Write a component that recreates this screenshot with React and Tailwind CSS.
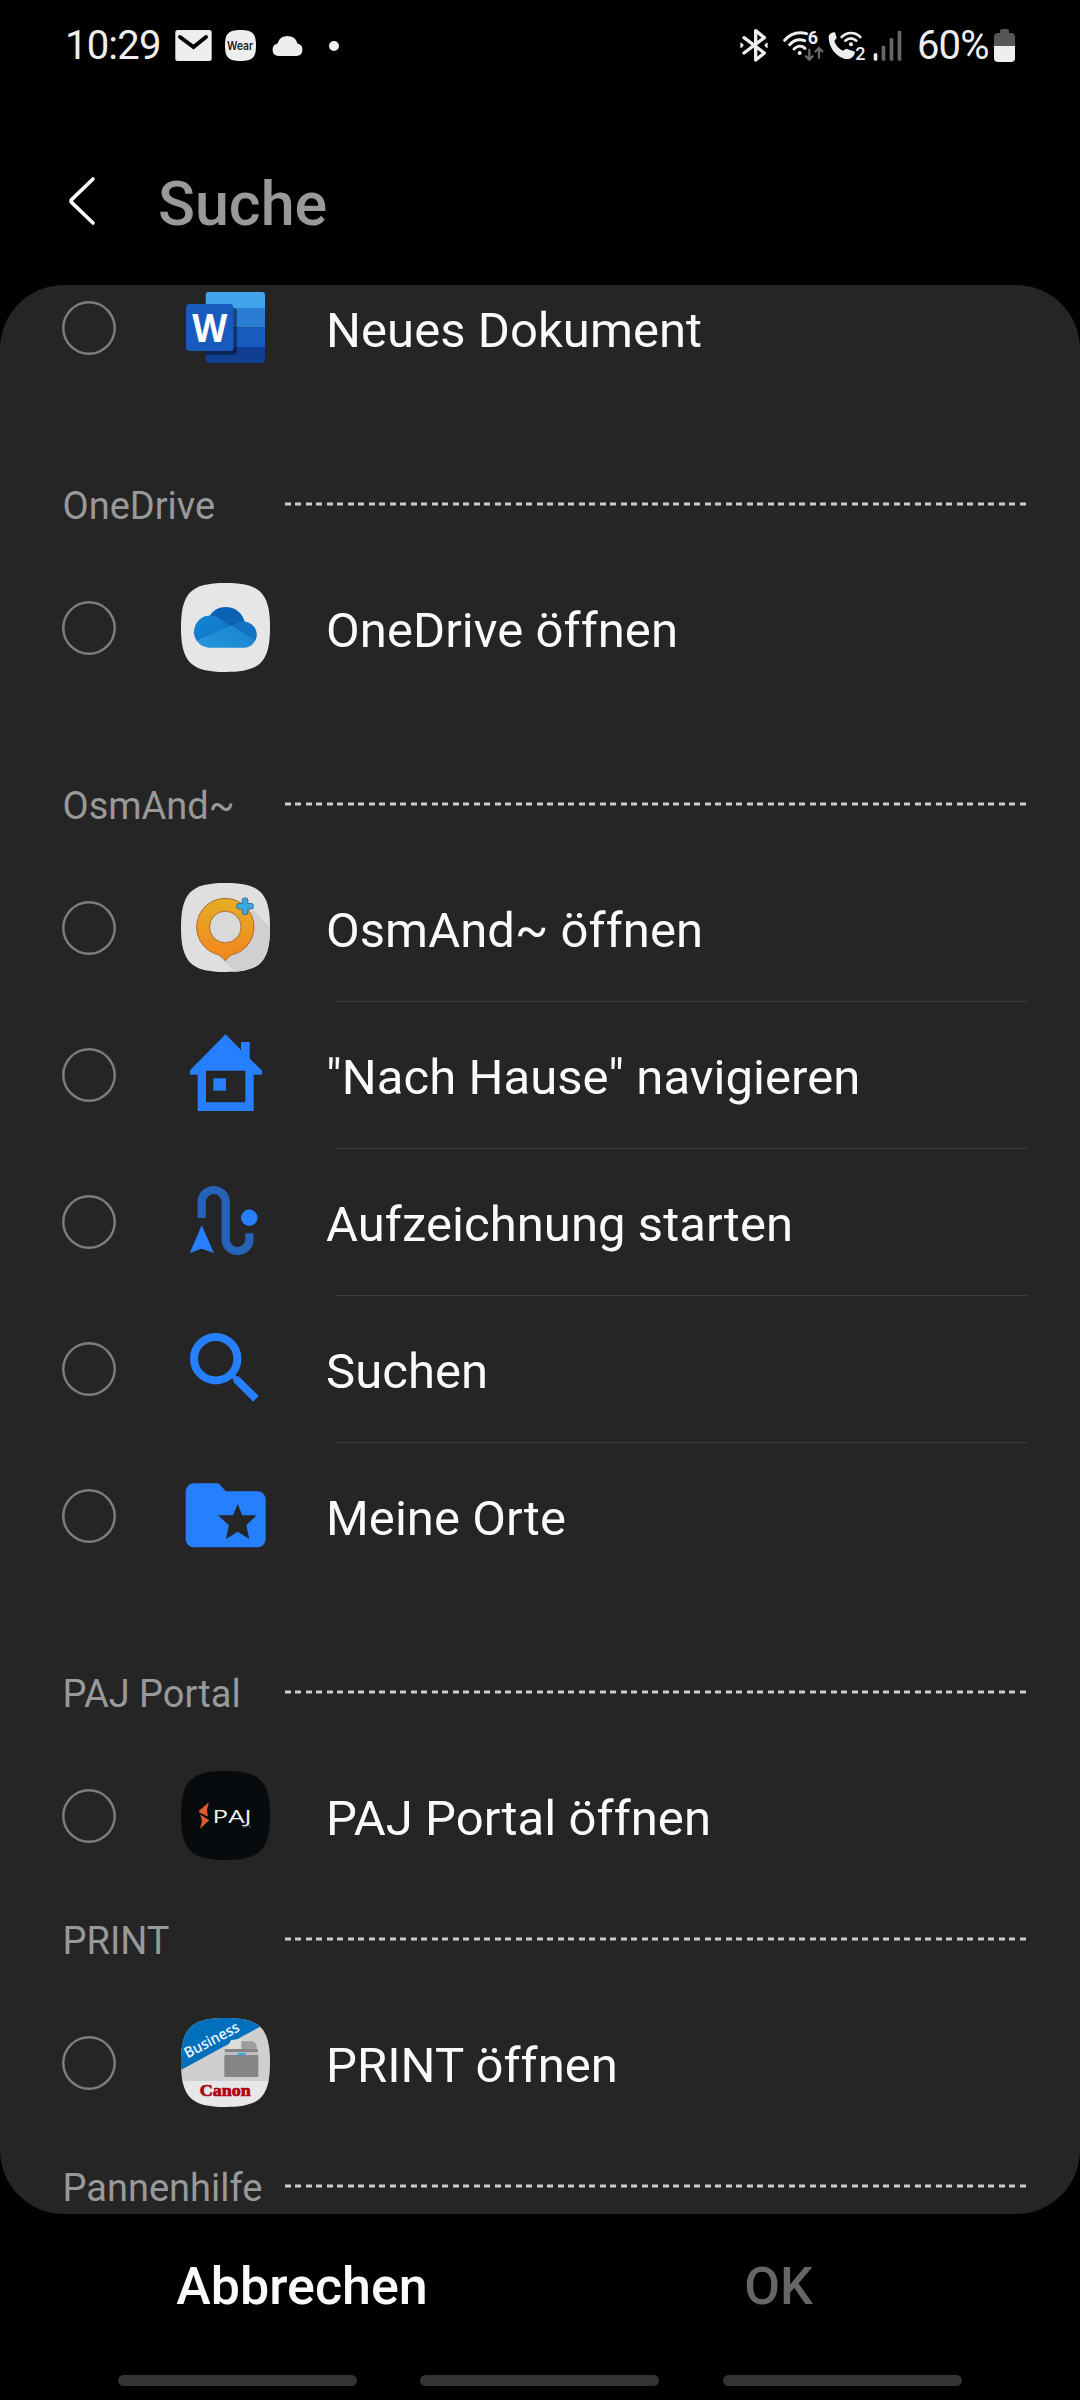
import React, { useState } from 'react'
import clsx from 'clsx'

const SQUIRCLE = 'M1 44.5C1 10 11 0 45.5 0S90 10 90 44.5S80 89 45.5 89S1 79 1 44.5Z'

const WordIcon = () => (
  <svg className="w-[90px] h-[90px]" viewBox="0 0 90 90">
    <defs>
      <clipPath id="word-page">
        <rect x="25.7" y="9" width="59.3" height="71" rx="3" />
      </clipPath>
    </defs>
    <g clipPath="url(#word-page)">
      <rect x="25" y="9" width="61" height="16" fill="#41a5ee" />
      <rect x="25" y="25" width="61" height="19.5" fill="#2b7cd3" />
      <rect x="25" y="44.5" width="61" height="19.5" fill="#185abd" />
      <rect x="25" y="64" width="61" height="17" fill="#103f91" />
      <rect x="8" y="25" width="49" height="46.7" rx="3.5" fill="#000" opacity="0.42" />
    </g>
    <rect x="6" y="21" width="47.3" height="47" rx="3.5" fill="#185abd" />
    <text x="12.3" y="59" fontFamily="Open Sans, sans-serif" fontWeight="700" fontSize="40" textLength="35" lengthAdjust="spacingAndGlyphs" fill="#fff">W</text>
  </svg>
)

const OneDriveIcon = () => (
  <svg className="w-[90px] h-[90px]" viewBox="0 0 90 90">
    <defs>
      <linearGradient id="od-left" x1="0" y1="0" x2="1" y2="1">
        <stop offset="0" stopColor="#1385d6" />
        <stop offset="1" stopColor="#1173c6" />
      </linearGradient>
      <linearGradient id="od-bottom" x1="0" y1="1" x2="1" y2="0.4">
        <stop offset="0" stopColor="#2497da" />
        <stop offset="1" stopColor="#1a84cf" />
      </linearGradient>
    </defs>
    <path d={SQUIRCLE} fill="#e6e6e6" />
    <path d="M29.5 33C33 27.3 39 24 45.7 24C55 24 62.5 30 64.7 39L50.7 43.6Z" fill="#0a62b3" />
    <path d="M31 32.5A16.3 16.3 0 0 0 17 58.2L50.9 43.2L38.5 35.2C36 33.5 34 32.5 31 32.5Z" fill="url(#od-left)" />
    <path d="M50.5 43L58 39.8C67 35.8 76.8 42.5 76.8 51.8C76.8 54 76.2 56 75 57.9Z" fill="#1272c6" />
    <path d="M17 58L50.7 43L75 57.6C73 62 69 64.8 64 64.8H30.5C25 64.8 20 62.5 17 58Z" fill="url(#od-bottom)" />
  </svg>
)

const OsmAndIcon = () => (
  <svg className="w-[90px] h-[90px]" viewBox="0 0 90 90">
    <defs>
      <linearGradient id="osm-ring" x1="0" y1="0" x2="0" y2="1">
        <stop offset="0" stopColor="#e5ae27" />
        <stop offset="1" stopColor="#f2841b" />
      </linearGradient>
      <clipPath id="osm-clip"><path d={SQUIRCLE} /></clipPath>
    </defs>
    <path d={SQUIRCLE} fill="#dfdfdf" />
    <path d="M34 68L57 91H95V49L73 27Z" fill="#d0d0d0" clipPath="url(#osm-clip)" />
    <circle cx="45.3" cy="44" r="16" fill="#d9d9d9" />
    <path
      d="M45.3 77.7C41.5 74.3 41.5 72 34.5 70.6A28.7 28.7 0 1 1 56.1 70.6C49.1 72 49.1 74.3 45.3 77.7ZM45.3 28.2A15.8 15.8 0 1 0 45.3 59.8A15.8 15.8 0 1 0 45.3 28.2Z"
      fill="url(#osm-ring)" fillRule="evenodd" stroke="#a5602c" strokeWidth="0.9"
    />
    <path d="M65 17.8V28.8M59.5 23.3H70.5" stroke="#2a6a94" strokeWidth="6.6" strokeLinecap="round" />
    <path d="M65 17.8V28.8M59.5 23.3H70.5" stroke="#3ba7dd" strokeWidth="5" strokeLinecap="round" />
  </svg>
)

const HouseIcon = () => (
  <svg className="w-[90px] h-[90px]" viewBox="0 0 90 90" fill="#267fff">
    <path
      fillRule="evenodd"
      d="M45.5 4.3L61 20V12H69.7V28.5L82 40.5V44.7H73.7V81H17.7V44.7H10V40.2ZM26 40.7V72.3H65.3V40.7Z"
    />
    <rect x="33.3" y="48.3" width="12.7" height="12.4" />
  </svg>
)

const TrackIcon = () => (
  <svg className="w-[90px] h-[90px]" viewBox="0 0 90 90" fill="#267fff">
    <path d="M21.7 41V25a12 12 0 0 1 24 0V64a12 12 0 0 0 23.7 0V56.3" fill="none" stroke="#2563b9" strokeWidth="8.2" />
    <circle cx="69.3" cy="40.7" r="8.2" />
    <path d="M21.7 48.3L33.9 76L21.7 71.7L9.8 76Z" />
  </svg>
)

const SearchIcon = () => (
  <svg className="w-[90px] h-[90px]" viewBox="0 0 90 90" fill="none" stroke="#267fff">
    <circle cx="35.7" cy="34.7" r="21.7" strokeWidth="8" />
    <path d="M50 49L58 57" strokeWidth="4.5" />
    <path d="M57.5 56.5L58 57" strokeWidth="8" strokeLinecap="round" />
    <path d="M57.5 56.5L76 74.8" strokeWidth="8" />
  </svg>
)

const PlacesIcon = () => (
  <svg className="w-[90px] h-[90px]" viewBox="0 0 90 90">
    <path
      fill="#267fff" fillRule="evenodd"
      d="M13.7 12.3H38.3L46 20.3H77.7A8 8 0 0 1 85.7 28.3V68.3A8 8 0 0 1 77.7 76.3H13.7A8 8 0 0 1 5.7 68.3V20.3A8 8 0 0 1 13.7 12.3ZM57.7 33L53 44.3H38L48.9 54.2L46 68L57.7 60.8L69.3 68L66.3 54.2L76.7 44.3H62.2Z"
    />
  </svg>
)

const PajIcon = () => (
  <svg className="w-[90px] h-[90px]" viewBox="0 0 90 90">
    <path d={SQUIRCLE} fill="#070b0e" />
    <path d="M28.9 31.3L19 39.7L19.3 41.6L27.8 45.4L27 38.5ZM20.2 43.6L29.2 49.2L20 57.8L22 50Z" fill="#df5a2c" />
    <text x="32.6" y="52.2" fontFamily="Open Sans, sans-serif" fontSize="18.6" textLength="39" lengthAdjust="spacingAndGlyphs" fill="#f2f2f2">PAJ</text>
    <text x="61.8" y="57" fontFamily="Open Sans, sans-serif" fontSize="4" textLength="9" fill="#777">GPS</text>
  </svg>
)

const CanonIcon = () => (
  <svg className="w-[90px] h-[90px] overflow-visible" viewBox="0 0 90 90">
    <defs>
      <clipPath id="canon-clip"><path d={SQUIRCLE} /></clipPath>
    </defs>
    <g clipPath="url(#canon-clip)">
      <rect width="90" height="64" fill="#cfcfcf" />
      <rect y="63" width="90" height="27" fill="#e7e7e7" />
      <path d="M0 52.5L90 3.3V0H0Z" fill="#0070bd" />
    </g>
    <text transform="translate(7.6 40.6) rotate(-28)" fontFamily="Open Sans, sans-serif" fontWeight="600" fontSize="15" textLength="60" lengthAdjust="spacingAndGlyphs" fill="#e8f4fb">Business</text>
    {/* copier */}
    <path d="M61 31.5V23.3H71.5C74.5 23.3 77 26 77 31.5Z" fill="#9d9d9d" />
    <path d="M46.5 31.5L51 22L61.3 21V31.5Z" fill="#dcdcdc" />
    <path d="M44.8 31H77.8V34.5H44.8Z" fill="#858585" />
    <path d="M44.3 34.3H78.3V37.5H44.3Z" fill="#c0c0c0" />
    <rect x="44.3" y="37" width="34" height="22" rx="0.8" fill="#858585" />
    <path d="M58.5 35H66.5L65 37.3H57Z" fill="#35a5e5" />
    <text x="19.8" y="78.3" fontFamily="Liberation Serif, serif" fontWeight="700" fontSize="16" textLength="51" lengthAdjust="spacingAndGlyphs" fill="#b00012" stroke="#b00012" strokeWidth="0.7">Canon</text>
  </svg>
)

const groups = [
  { items: [{ id: 'word', label: 'Neues Dokument', icon: WordIcon }] },
  { title: 'OneDrive', spaced: true, items: [{ id: 'onedrive', label: 'OneDrive öffnen', icon: OneDriveIcon }] },
  {
    title: 'OsmAnd~',
    spaced: true,
    items: [
      { id: 'osmand', label: 'OsmAnd~ öffnen', icon: OsmAndIcon },
      { id: 'home', label: '"Nach Hause" navigieren', icon: HouseIcon },
      { id: 'track', label: 'Aufzeichnung starten', icon: TrackIcon },
      { id: 'search', label: 'Suchen', icon: SearchIcon },
      { id: 'places', label: 'Meine Orte', icon: PlacesIcon }
    ]
  },
  { title: 'PAJ Portal', spaced: true, items: [{ id: 'paj', label: 'PAJ Portal öffnen', icon: PajIcon }] },
  { title: 'PRINT', items: [{ id: 'print', label: 'PRINT öffnen', icon: CanonIcon }] },
  { title: 'Pannenhilfe', items: [] }
]

const StatusBar = () => (
  <div className="flex h-[91px] shrink-0 items-center pl-[65px] pr-[65px] text-[#eeeeee]">
    <span className="w-[110px] text-[40px] leading-none tracking-[-0.8px]">10:29</span>
    <svg className="w-[37px] h-[31px]" viewBox="0 0 37 31">
      <rect x="0.3" width="36.4" height="31" rx="2.5" fill="#eee" />
      <path d="M5 7L18.5 17L31 7" fill="none" stroke="#000" strokeWidth="4" strokeLinecap="round" />
    </svg>
    <svg className="ml-[13px] w-[31px] h-[31px]" viewBox="0 0 31 31">
      <path d="M0 15.5C0 3.5 3.5 0 15.5 0S31 3.5 31 15.5S27.5 31 15.5 31S0 27.5 0 15.5Z" fill="#eee" />
      <text x="2" y="20" fontFamily="Inter, sans-serif" fontWeight="600" fontSize="11.5" textLength="26" lengthAdjust="spacingAndGlyphs" fill="#222">Wear</text>
    </svg>
    <svg className="ml-[16px] w-[31px] h-[21px]" viewBox="0 0 31 21">
      <path d="M6.5 21A6.4 6.4 0 0 1 5.5 8.4A10.5 10.5 0 0 1 25.5 8.4A6.4 6.4 0 0 1 24.5 21Z" fill="#eee" />
    </svg>
    <div className="ml-[26px] h-[10px] w-[10px] rounded-full bg-[#eeeeee]" />

    <div className="ml-auto flex items-center">
      <svg className="w-[28px] h-[33px]" viewBox="58 57 84 99" fill="none" stroke="#eee" strokeWidth="10" strokeLinejoin="round" strokeLinecap="round">
        <path d="M70 83L131 129L105 150V62L131 83L70 129" />
        <path d="M61 100V112L67 106ZM139 100V112L133 106Z" strokeWidth="4" fill="#eee" />
      </svg>
      <svg className="ml-[15px] w-[41px] h-[33px] overflow-visible" viewBox="186 57 123 99" fill="none" stroke="#eee" strokeWidth="9" strokeLinecap="round">
        <path d="M191 91C209 70 233 65 257 71" />
        <path d="M206 104C219 90 236 87 251 92" />
        <path d="M219 117C229 107 242 106 252 115" />
        <circle cx="236" cy="129" r="6" fill="#eee" stroke="none" />
        <text x="260" y="103" fontSize="54" fontWeight="700" fill="#eee" stroke="none">6</text>
        <path d="M265 119V148M255 139L265 149L275 139M294 143V114M284 124L294 114L304 124" stroke="#666" strokeWidth="7" />
      </svg>
      <svg className="ml-[4px] w-[38px] h-[33px] overflow-visible" viewBox="321 57 114 99">
        <path d="M323 78C326 70 334 66 342 67L347 84L340 93C344 106 353 116 366 122L376 116L402 125C400 140 389 148 376 147C346 143 322 112 323 78Z" fill="#eee" />
        <path d="M362 81C378 65 402 65 418 81M373 92C383 84 396 84 406 92" fill="none" stroke="#eee" strokeWidth="8" strokeLinecap="round" />
        <circle cx="390" cy="103" r="6" fill="#eee" />
        <path d="M403 112H433V152H403Z" fill="#000" />
        <text x="403" y="150" fontSize="54" fontWeight="500" fill="#eee">2</text>
      </svg>
      <svg className="ml-[7px] w-[29px] h-[33px]" viewBox="457 57 87 99" fill="#666">
        <rect x="459" y="130" width="11" height="22" rx="4" fill="#eee" />
        <rect x="483" y="107" width="11" height="45" rx="4" />
        <rect x="507" y="84" width="11" height="68" rx="4" />
        <rect x="531" y="62" width="11" height="90" rx="4" />
      </svg>
      <span className="ml-[15px] w-[77px] text-[40px] leading-none tracking-[-0.9px]">60%</span>
      <svg className="w-[21px] h-[33px]" viewBox="0 0 21 33">
        <path d="M6 4V2Q6 0 8 0H13Q15 0 15 2V4H17Q21 4 21 8V17H0V8Q0 4 4 4Z" fill="#565656" />
        <path d="M0 17H21V29Q21 33 17 33H4Q0 33 0 29Z" fill="#eee" />
      </svg>
    </div>
  </div>
)

const Header = () => (
  <div className="flex h-[194px] shrink-0 items-center pl-[68px] pt-[26px]">
    <svg className="w-[28px] h-[50px]" viewBox="0 0 28 50" fill="none" stroke="#fff" strokeWidth="3.6" strokeLinecap="round" strokeLinejoin="round">
      <path d="M25 3L3.6 23.6Q2.4 25 3.6 26.4L25 47" />
    </svg>
    <h1 className="ml-[62px] pt-[6px] text-[61px] font-medium leading-none text-[#999999]">Suche</h1>
  </div>
)

const SectionTitle = ({ title, spaced }) => (
  <div className={clsx('flex h-[100px] items-center pl-[62.5px]', spaced && 'mt-[53px]')}>
    <span className="w-[222.5px] whitespace-nowrap pt-[2px] text-[38px] leading-none text-[#999999]">{title}</span>
    <div className="mb-[2px] h-[4px] w-[741px] border-y border-[#252525]/50 bg-[repeating-linear-gradient(90deg,#cccccc_0_5.7px,#252525_5.7px_10.5px)]" />
  </div>
)

const ActionRow = ({ item, selected, onSelect, last }) => {
  const Icon = item.icon
  return (
    <>
      <button className="flex h-[146px] w-full items-center pl-[62px] text-left" onClick={() => onSelect(item.id)}>
        <span className="flex h-[54px] w-[54px] items-center justify-center rounded-full shadow-[inset_0_0_0_2.5px_#7d7d7d]">
          {selected && <span className="h-[28px] w-[28px] rounded-full bg-[#267fff]" />}
        </span>
        <span className="ml-[64px] h-[90px] w-[90px]">
          <Icon />
        </span>
        <span className="ml-[56px] whitespace-nowrap pt-[4px] text-[49px] leading-none tracking-[0.06px] text-[#fafafa]">{item.label}</span>
      </button>
      <div className={clsx('ml-[336px] mr-[53px] h-px', !last && 'bg-[#3d3d3d]')} />
    </>
  )
}

const App = () => {
  const [selected, setSelected] = useState(null)

  return (
    <div className="flex h-[2400px] w-[1080px] flex-col overflow-hidden bg-black font-[Roboto,sans-serif]">
      <StatusBar />
      <Header />

      {/* Scrolled action list */}
      <div className="h-[1929px] shrink-0 overflow-hidden rounded-[64px] bg-[#252525]">
        <div className="-mt-[30px]">
          {groups.map((group, index) => (
            <div key={index}>
              {group.title && <SectionTitle title={group.title} spaced={group.spaced} />}
              {group.items.map((item, i) => (
                <ActionRow
                  key={item.id}
                  item={item}
                  selected={selected === item.id}
                  onSelect={setSelected}
                  last={i === group.items.length - 1}
                />
              ))}
            </div>
          ))}
        </div>
      </div>

      {/* Dialog buttons */}
      <div className="flex h-[161px] shrink-0 items-center px-[59px] pb-[16px] text-[52px] font-medium leading-none">
        <button className="w-[486px] text-[#fafafa]" onClick={() => setSelected(null)}>Abbrechen</button>
        <button className={clsx('w-[467px]', selected ? 'text-[#fafafa]' : 'text-[#666666]')}>OK</button>
      </div>

      {/* Navigation hints */}
      <div className="flex ml-[118px]">
        <div className="h-[11px] w-[239px] rounded-full bg-[#333333]" />
        <div className="ml-[63px] h-[11px] w-[239px] rounded-full bg-[#333333]" />
        <div className="ml-[64px] h-[11px] w-[239px] rounded-full bg-[#333333]" />
      </div>
    </div>
  )
}

export default App
